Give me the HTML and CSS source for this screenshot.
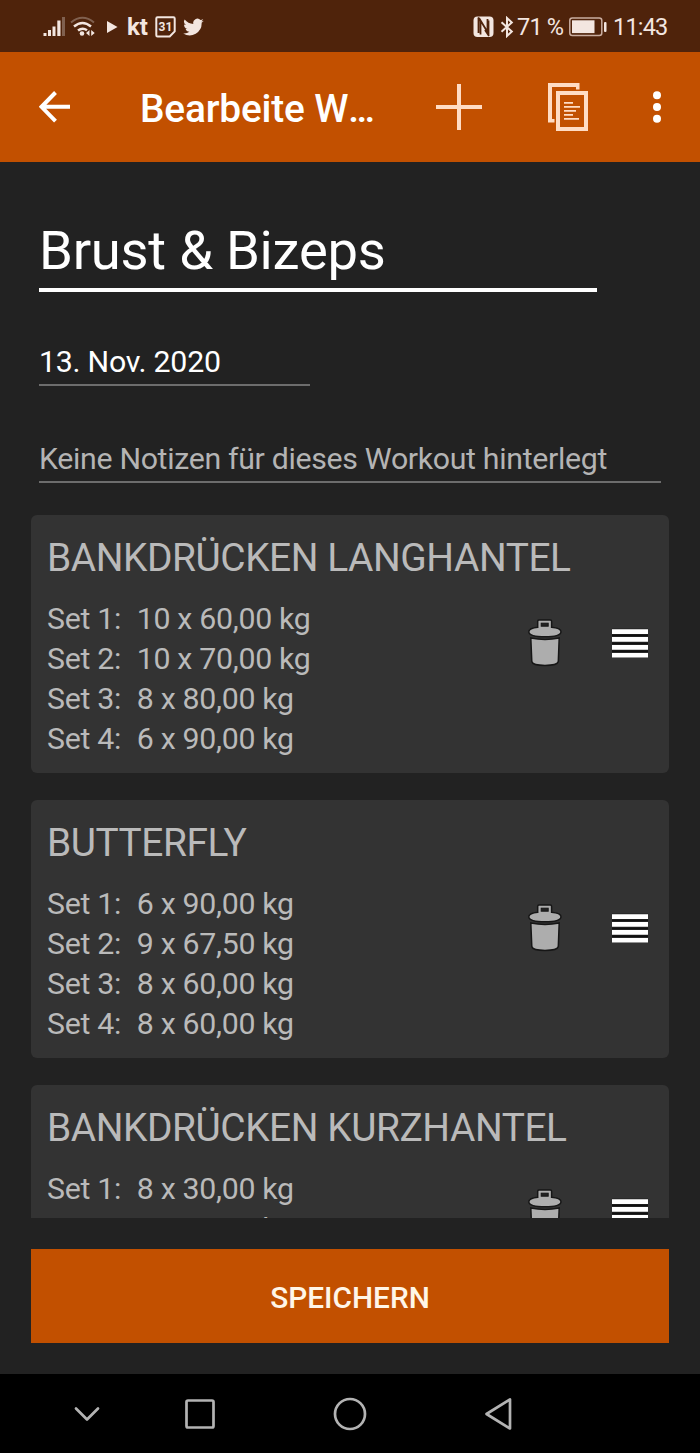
FILE: index.html
```html
<!DOCTYPE html>
<html lang="de">
<head>
    <meta charset="UTF-8">
    <meta name="viewport" content="width=device-width, initial-scale=1.0">
    <title>Bearbeite Workout</title>
    <link rel="stylesheet" href="styles.css">
</head>
<body>
    <!-- shared icons -->
    <svg class="sprite">
        <symbol id="trash" viewBox="0 0 36 50">
            <path class="trash-part" d="M10.700 9.200V3.200Q10.700 2 11.900 2H23.400Q24.600 2 24.600 3.200V9.200C31 9.800 34 11.200 34 13.800C34 17.200 28 18.800 18 18.800C8 18.800 1.800 17.200 1.800 13.800C1.800 11.200 5 9.800 10.700 9.200z"/>
            <path class="trash-part" d="M3.800 20Q18 22.800 32.200 20L31.300 43.500Q30.500 47.400 18 47.400Q5.500 47.400 4.800 43.500z"/>
            <rect class="trash-hole" x="14.200" y="5.200" width="7" height="3"/>
        </symbol>
        <symbol id="drag" viewBox="0 0 38 32">
            <path class="drag-shadow" d="M1 1h36v30H1z"/>
            <path class="drag-gap" d="M1 7.500h36v1.700H1zM1 15.500h36v1.700H1zM1 23.300h36v1.700H1z"/>
            <path class="drag-bar" d="M1 2.300h36v4.600H1zM1 10.100h36v4.600H1zM1 18.100h36v4.600H1zM1 25.900h36v4.600H1z"/>
        </symbol>
    </svg>

    <div class="status-bar">
        <div class="status-left">
            <svg class="signal" width="22" height="22" viewBox="0 0 22 22">
                <path d="M.5 17h3v3h-3zM5 14h3v6H5zM9.500 10.500h3V20h-3zM14.300 4.500h3.200V20h-3.200z"/>
                <path class="faded" d="M19 1h3v19h-3z"/>
            </svg>
            <svg class="wifi" width="26" height="22" viewBox="0 0 26 22">
                <path class="faded-line" d="M1 6.500Q12.500-3 24 6.500"/>
                <path class="line" d="M4 10.500Q12.500 3.500 21 10.500M8 14.500Q12.500 11 17 14.200"/>
                <circle cx="12" cy="17.500" r="2.300"/>
                <path d="M19.500 14v6l-3.500-3zM21.200 14v6l3.500-3z"/>
            </svg>
            <svg class="play" width="11" height="14" viewBox="0 0 11 14"><path d="M0 1l10.500 6L0 13z"/></svg>
            <span class="kt">kt</span>
            <span class="calendar">
                <svg width="21" height="22" viewBox="0 0 21 22"><path class="line" d="M2.500 1.200h16q1.200 0 1.200 1.200v13l-5 5H2.500q-1.200 0-1.200-1.200V2.400q0-1.200 1.200-1.200z"/></svg>
                <b>31</b>
            </span>
            <svg class="bird" width="21" height="18" viewBox="0 1.500 24 21"><path d="M24 4.600a10 10 0 0 1-2.800.8 5 5 0 0 0 2.100-2.700 10 10 0 0 1-3.100 1.200 4.900 4.900 0 0 0-8.400 4.500A14 14 0 0 1 1.700 3.200a4.900 4.900 0 0 0 1.500 6.500A5 5 0 0 1 1 9.100a4.900 4.900 0 0 0 3.900 4.900 5 5 0 0 1-2.200.1 4.900 4.900 0 0 0 4.600 3.400A10 10 0 0 1 0 19.500 14 14 0 0 0 21.500 7a10 10 0 0 0 2.500-2.400z"/></svg>
        </div>
        <div class="status-right">
            <svg class="nfc" width="21" height="22" viewBox="0 0 21 22">
                <rect x=".5" y=".5" width="20" height="20.500" rx="4"/>
                <path class="nfc-line" d="M5.500 1.500v15.500M7.500 18.500V4.500l7 11.500V3M15.500 4.500v15M5 1.500l4 6M12 14l4 6"/>
            </svg>
            <svg class="bluetooth" width="14" height="22" viewBox="0 0 14 22"><path class="line" d="M1.500 6.200L11.800 15.500 7 20V2l4.800 4.500L1.500 15.800"/></svg>
            <span class="percent">71 %</span>
            <svg class="battery" width="38" height="20" viewBox="0 0 38 20">
                <rect class="outline" x=".8" y="1" width="32" height="17.500" rx="2.500"/>
                <rect x="3" y="3.300" width="22.500" height="12.800"/>
                <rect x="35" y="5" width="2.500" height="10" rx="1"/>
            </svg>
            <span class="clock">11:43</span>
        </div>
    </div>

    <header>
        <svg class="back" width="32" height="32" viewBox="0 0 32 32"><path d="M31 15.800H3M16.500 1.500L2.500 15.800l14 14.300"/></svg>
        <h1>Bearbeite W<span>...</span></h1>
        <svg class="add" width="46" height="46" viewBox="0 0 46 46"><path d="M0 21h21V0h4v21h21v4H25v21h-4V25H0z"/></svg>
        <svg class="copy" width="40" height="48" viewBox="0 0 40 48">
            <path d="M0 0h31.500v6.500H28V4H4v32h2.500v3.500H0z"/>
            <path fill-rule="evenodd" d="M8 8h32v40H8zM12 12v32h24V12z"/>
            <path d="M16 19h9v1.800h-9zM16 23h16v1.800H16zM16 27h12v1.800H16zM16 31h9v1.800h-9zM16 35h15v1.800H16z"/>
        </svg>
        <svg class="more" width="8" height="32" viewBox="0 0 8 32"><circle cx="4" cy="4.200" r="4"/><circle cx="4" cy="16" r="4"/><circle cx="4" cy="27.700" r="4"/></svg>
    </header>

    <main>
        <div class="field name">Brust &amp; Bizeps</div>
        <div class="field date">13. Nov. 2020</div>
        <div class="field notes">Keine Notizen für dieses Workout hinterlegt</div>

        <div class="exercises">
            <div class="card">
                <h2>BANKDRÜCKEN LANGHANTEL</h2>
                <div class="card-body">
                    <ul>
                        <li><span>Set 1:</span>10 x 60,00 kg</li>
                        <li><span>Set 2:</span>10 x 70,00 kg</li>
                        <li><span>Set 3:</span>8 x 80,00 kg</li>
                        <li><span>Set 4:</span>6 x 90,00 kg</li>
                    </ul>
                    <svg class="trash"><use href="#trash"/></svg>
                    <svg class="drag"><use href="#drag"/></svg>
                </div>
            </div>
            <div class="card">
                <h2>BUTTERFLY</h2>
                <div class="card-body">
                    <ul>
                        <li><span>Set 1:</span>6 x 90,00 kg</li>
                        <li><span>Set 2:</span>9 x 67,50 kg</li>
                        <li><span>Set 3:</span>8 x 60,00 kg</li>
                        <li><span>Set 4:</span>8 x 60,00 kg</li>
                    </ul>
                    <svg class="trash"><use href="#trash"/></svg>
                    <svg class="drag"><use href="#drag"/></svg>
                </div>
            </div>
            <div class="card">
                <h2>BANKDRÜCKEN KURZHANTEL</h2>
                <div class="card-body">
                    <ul>
                        <li><span>Set 1:</span>8 x 30,00 kg</li>
                        <li><span>Set 2:</span>8 x 30,00 kg</li>
                    </ul>
                    <svg class="trash"><use href="#trash"/></svg>
                    <svg class="drag"><use href="#drag"/></svg>
                </div>
            </div>
        </div>

        <button class="save">SPEICHERN</button>
    </main>

    <footer>
        <svg width="26" height="32" viewBox="0 0 26 32"><path d="M2 10.500l11 11 11-11"/></svg>
        <svg width="32" height="32" viewBox="0 0 32 32"><rect x="2.500" y="2.500" width="27" height="27" rx="1.500"/></svg>
        <svg width="34" height="34" viewBox="0 0 34 34"><circle cx="17" cy="17" r="15"/></svg>
        <svg width="30" height="34" viewBox="0 0 30 34"><path d="M2.500 17L26 2.500v29z"/></svg>
    </footer>
</body>
</html>
```
FILE: styles.css
```css
* {
    box-sizing: border-box;
}
body {
    font-family: Roboto, sans-serif;
    background-color: #222222;
    color: white;
    margin: 0;
    width: 700px;
    height: 1453px;
    display: flex;
    flex-direction: column;
    overflow: hidden;
}
svg {
    display: block;
    flex-shrink: 0;
}
.sprite {
    display: none;
}

/* Status bar */
.status-bar {
    height: 52px;
    background-color: #4f230b;
    color: #f3e6e0;
    display: flex;
    justify-content: space-between;
    align-items: center;
    padding: 1px 33px 0 43px;
}
.status-left,
.status-right {
    display: flex;
    align-items: center;
}
.status-bar svg {
    fill: #f3e6e0;
}
.status-bar .line {
    fill: none;
    stroke: #f3e6e0;
    stroke-width: 2;
}
.status-bar .faded {
    fill: #80604f;
}
.status-bar .faded-line {
    fill: none;
    stroke: #80604f;
    stroke-width: 2;
}
.wifi {
    margin-left: 5px;
}
.status-bar .wifi .line {
    stroke-width: 2.5;
}
.play {
    margin-left: 11px;
}
.kt {
    font-size: 24px;
    font-weight: 700;
    width: 21px;
    margin-left: 9px;
}
.calendar {
    position: relative;
    margin-left: 7px;
}
.calendar b {
    position: absolute;
    left: 0;
    top: 4px;
    width: 21px;
    text-align: center;
    font-size: 12px;
    line-height: 14px;
}
.bird {
    margin-left: 7px;
}
.status-bar .nfc-line {
    fill: none;
    stroke: #4f230b;
    stroke-width: 1.8;
}
.bluetooth {
    margin-left: 6px;
}
.percent,
.clock {
    font-size: 23.500px;
    letter-spacing: -0.800px;
    white-space: nowrap;
}
.percent {
    margin-left: 3px;
    width: 48px;
}
.status-bar .battery {
    margin-left: 4px;
}
.status-bar .battery .outline {
    fill: none;
    stroke: #c9ada0;
    stroke-width: 1.5;
}
.clock {
    margin-left: 6px;
    width: 54px;
}

/* App bar */
header {
    height: 110px;
    background-color: #c25000;
    display: flex;
    align-items: center;
    padding: 0 39px;
}
.back {
    fill: none;
    stroke: white;
    stroke-width: 4;
}
h1 {
    font-size: 38.900px;
    font-weight: 500;
    margin: 0 0 0 69px;
    padding-top: 3px;
    width: 296px;
    line-height: 46px;
    letter-spacing: -0.200px;
}
h1 span {
    letter-spacing: -2.600px;
}
.add,
.copy {
    fill: #ffdcc4;
}
.copy {
    margin-left: 66px;
}
.more {
    margin-left: 65px;
    fill: white;
}

/* Form */
main {
    height: 1212px;
    padding: 0 31px;
    display: flex;
    flex-direction: column;
}
.field {
    margin-left: 8px;
    white-space: nowrap;
}
.name {
    font-size: 54.400px;
    line-height: 64px;
    letter-spacing: -0.250px;
    margin-top: 57px;
    width: 558px;
    height: 73px;
    border-bottom: 4px solid white;
}
.date {
    font-size: 30.300px;
    line-height: 36px;
    letter-spacing: -0.250px;
    margin-top: 52px;
    width: 271px;
    height: 42px;
    border-bottom: 2px solid #6d6d6d;
}
.notes {
    font-size: 30.300px;
    line-height: 36px;
    letter-spacing: -0.330px;
    margin-top: 55px;
    width: 622px;
    height: 42px;
    border-bottom: 2px solid #6d6d6d;
    color: #b4b4b4;
}

/* Exercise list */
.exercises {
    height: 703px;
    margin-top: 32px;
    overflow: hidden;
}
.card {
    height: 258px;
    margin-bottom: 27.200px;
    padding: 20px 21px 0 16px;
    background-color: #333333;
    border-radius: 6px;
    color: #bababa;
}
h2 {
    font-size: 38.900px;
    line-height: 46px;
    font-weight: 400;
    letter-spacing: -0.450px;
    margin: 0 0 18px;
}
.card-body {
    display: flex;
    align-items: flex-start;
}
ul {
    list-style: none;
    margin: 0;
    padding: 0;
    flex: 1;
    font-size: 30.300px;
    line-height: 40.100px;
    letter-spacing: -0.300px;
}
li span {
    display: inline-block;
    width: 89.700px;
}
.trash {
    width: 36px;
    height: 50px;
    margin-top: 19px;
    margin-right: 48px;
}
.trash-part {
    fill: #adadad;
    stroke: #161616;
    stroke-width: 1.500;
}
.trash-hole {
    fill: #222222;
    stroke: #161616;
}
.drag {
    width: 38px;
    height: 32px;
    margin-top: 28px;
    margin-right: -1px;
}
.drag-shadow {
    fill: #292929;
}
.drag-gap {
    fill: #101010;
}
.drag-bar {
    fill: white;
}

.save {
    height: 94px;
    margin-top: 31px;
    background-color: #c25000;
    color: #fff6e8;
    border: none;
    font-family: Roboto, sans-serif;
    font-size: 29.800px;
    font-weight: 500;
    padding: 2px 0 0;
}

/* Navigation bar */
footer {
    height: 79px;
    background-color: black;
    display: flex;
    align-items: center;
    padding-left: 74px;
}
footer svg {
    fill: none;
    stroke: #b3b3b3;
    stroke-width: 2.700;
    stroke-linecap: round;
    stroke-linejoin: round;
}
footer svg:nth-child(2) {
    margin-left: 84px;
}
footer svg:nth-child(3) {
    margin-left: 117px;
}
footer svg:nth-child(4) {
    margin-left: 117px;
}
```
